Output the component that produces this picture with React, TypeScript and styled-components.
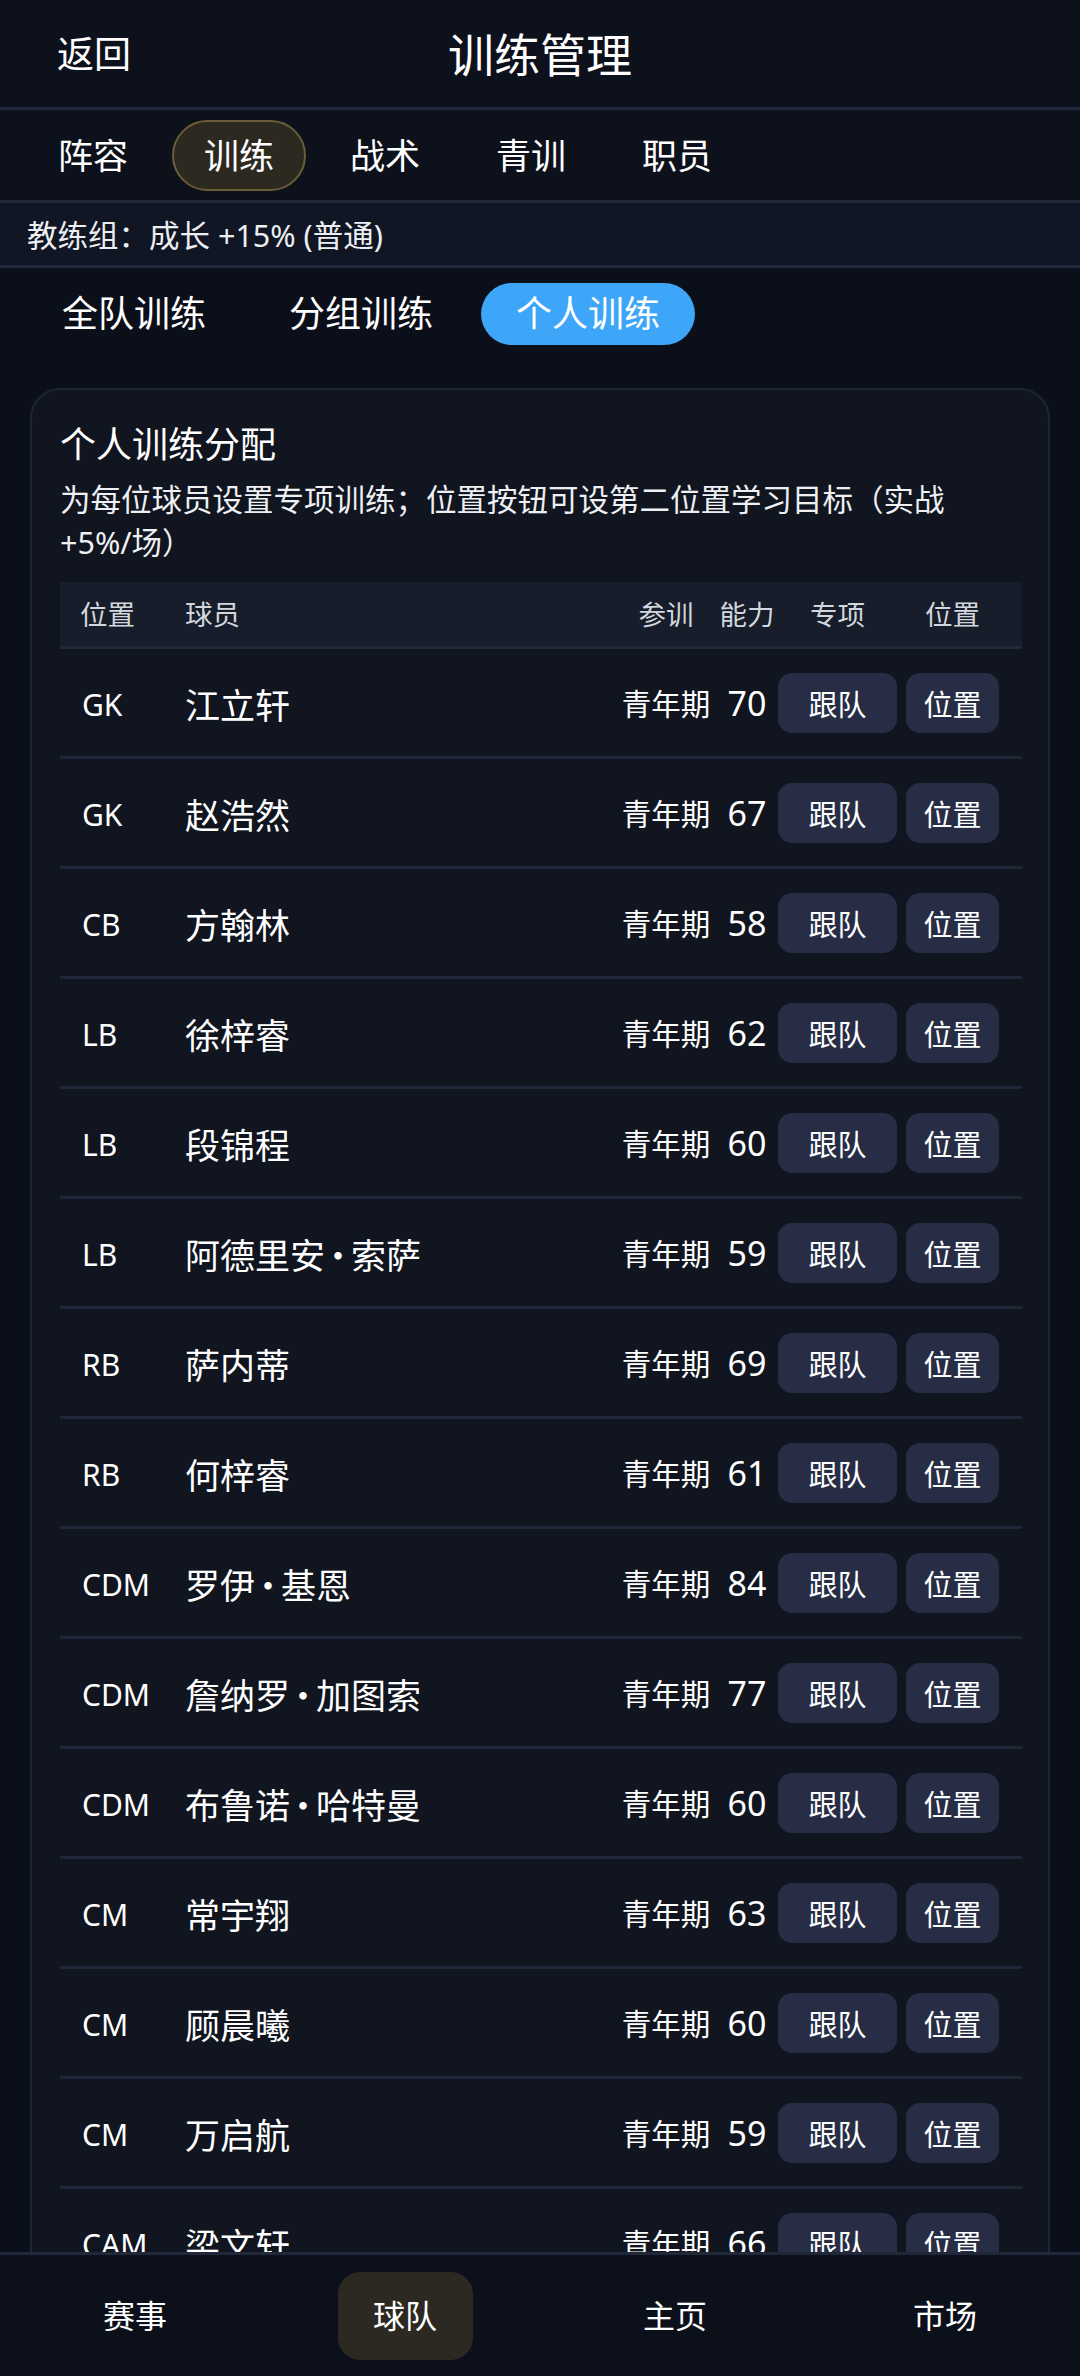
import React from 'react';
import styled, { createGlobalStyle } from 'styled-components';

type Player = { pos: string; name: string; ability: number };

const players: Player[] = [
  { pos: 'GK', name: '江立轩', ability: 70 },
  { pos: 'GK', name: '赵浩然', ability: 67 },
  { pos: 'CB', name: '方翰林', ability: 58 },
  { pos: 'LB', name: '徐梓睿', ability: 62 },
  { pos: 'LB', name: '段锦程', ability: 60 },
  { pos: 'LB', name: '阿德里安·索萨', ability: 59 },
  { pos: 'RB', name: '萨内蒂', ability: 69 },
  { pos: 'RB', name: '何梓睿', ability: 61 },
  { pos: 'CDM', name: '罗伊·基恩', ability: 84 },
  { pos: 'CDM', name: '詹纳罗·加图索', ability: 77 },
  { pos: 'CDM', name: '布鲁诺·哈特曼', ability: 60 },
  { pos: 'CM', name: '常宇翔', ability: 63 },
  { pos: 'CM', name: '顾晨曦', ability: 60 },
  { pos: 'CM', name: '万启航', ability: 59 },
  { pos: 'CAM', name: '梁文轩', ability: 66 },
];

const topTabs = ['阵容', '训练', '战术', '青训', '职员'];
const subTabs = ['全队训练', '分组训练', '个人训练'];
const navItems = ['赛事', '球队', '主页', '市场'];

// names like "罗伊·基恩": the dot is set a bit tighter than a full em
const renderName = (name: string) =>
  name.split('·').map((part, i) => (
    <React.Fragment key={i}>
      {i > 0 && <Dot>·</Dot>}
      {part}
    </React.Fragment>
  ));

const App: React.FC = () => (
  <>
    <GlobalStyle />
    <Screen>
      <TopBar>
        <Back>返回</Back>
        <Title>训练管理</Title>
        <span />
      </TopBar>
      <TabBar>
        {topTabs.map((t) => (
          <Tab key={t} $active={t === '训练'}>
            {t}
          </Tab>
        ))}
      </TabBar>
      <InfoBar>教练组：成长 +15% (普通)</InfoBar>
      <Scroll>
        <SubTabs>
          {subTabs.map((t) => (
            <SubTab key={t} $active={t === '个人训练'}>
              {t}
            </SubTab>
          ))}
        </SubTabs>
        <Card>
          <CardTitle>个人训练分配</CardTitle>
          <Desc>
            为每位球员设置专项训练；位置按钮可设第二位置学习目标（实战
            <NoWrap>+5%/场）</NoWrap>
          </Desc>
          <HeadRow>
            <HeadCell>位置</HeadCell>
            <HeadCell>球员</HeadCell>
            <HeadCell $center>参训</HeadCell>
            <HeadCell $center>能力</HeadCell>
            <SpecHead $center>专项</SpecHead>
            <HeadCell $center>位置</HeadCell>
          </HeadRow>
          {players.map((p) => (
            <Row key={p.name}>
              <Pos>{p.pos}</Pos>
              <Name>{renderName(p.name)}</Name>
              <Stage>青年期</Stage>
              <Ability>{p.ability}</Ability>
              <ActionButton $w={119}>跟队</ActionButton>
              <ActionButton $w={93}>位置</ActionButton>
            </Row>
          ))}
        </Card>
      </Scroll>
      <BottomNav>
        {navItems.map((n) => (
          <NavItem key={n} $active={n === '球队'}>
            {n}
          </NavItem>
        ))}
      </BottomNav>
    </Screen>
  </>
);

export default App;

const GlobalStyle = createGlobalStyle`
  html, body {
    margin: 0;
    padding: 0;
    background: #0b0f1a;
  }
  body {
    font-family: "Noto Sans", "Noto Sans CJK SC", sans-serif;
    color: #ffffff;
  }
  * {
    box-sizing: border-box;
  }
`;

const Screen = styled.div`
  height: 100vh;
  display: flex;
  flex-direction: column;
  overflow: hidden;
  background: #0b0f1a;
`;

const TopBar = styled.header`
  display: grid;
  grid-template-columns: 1fr auto 1fr;
  align-items: center;
  height: 110px;
  padding: 0 57px;
  background: #0d111c;
  border-bottom: 3px solid #20283a;
  flex-shrink: 0;
`;
const Back = styled.span`
  font-size: 37px;
  line-height: 1;
  justify-self: start;
`;
const Title = styled.h1`
  margin: 0;
  font-size: 46px;
  font-weight: 400;
  line-height: 1;
`;

const TabBar = styled.nav`
  display: flex;
  align-items: center;
  gap: 12px;
  height: 93px;
  padding: 0 26px;
  background: #0d111c;
  border-bottom: 3px solid #20283a;
  flex-shrink: 0;
`;
const Tab = styled.div<{ $active?: boolean }>`
  display: flex;
  align-items: center;
  height: 71px;
  padding: 0 30px;
  border-radius: 36px;
  border: 2px solid ${(p) => (p.$active ? '#6b5d36' : 'transparent')};
  background: ${(p) => (p.$active ? '#2c2920' : 'transparent')};
  font-size: 35px;
  line-height: 1;
`;

const InfoBar = styled.div`
  display: flex;
  align-items: center;
  height: 65px;
  padding-left: 27px;
  font-size: 30.5px;
  color: #eceef2;
  background: #111624;
  border-bottom: 3px solid #20283a;
  flex-shrink: 0;
`;

const Scroll = styled.main`
  flex: 1;
  min-height: 0;
  overflow: hidden;
  background: #0b0f1a;
`;

const SubTabs = styled.div`
  display: flex;
  gap: 13px;
  padding: 15px 27px 0;
`;
const SubTab = styled.div<{ $active?: boolean }>`
  display: flex;
  align-items: center;
  height: 62px;
  padding: 0 35px;
  border-radius: 31px;
  background: ${(p) => (p.$active ? '#3ea6f8' : 'transparent')};
  font-size: 36px;
  line-height: 1;
`;

const Card = styled.section`
  margin: 43px 30px 0;
  padding: 30px 26px 0 28px;
  border: 2px solid #1e2536;
  border-radius: 30px;
  background: #10151f;
`;
const CardTitle = styled.h2`
  margin: 0;
  font-size: 36px;
  font-weight: 400;
  line-height: 50px;
`;
const Desc = styled.p`
  margin: 8px 0 0;
  font-size: 30.5px;
  line-height: 43px;
  color: #eef0f4;
`;
const NoWrap = styled.span`
  white-space: nowrap;
`;

const HeadRow = styled.div`
  display: grid;
  grid-template-columns: 105px 1fr 100px 62px 128px 93px;
  align-items: center;
  height: 67px;
  margin-top: 18px;
  padding: 0 23px 0 20px;
  background: #171d2b;
  border-bottom: 3px solid #20283a;
`;
const HeadCell = styled.div<{ $center?: boolean }>`
  font-size: 27.5px;
  line-height: 1;
  color: #d3d6dd;
  text-align: ${(p) => (p.$center ? 'center' : 'left')};
  font-family: "Noto Sans CJK SC", sans-serif;
`;
const SpecHead = styled(HeadCell)`
  width: 119px;
`;

const Row = styled.div`
  display: grid;
  grid-template-columns: 105px 1fr 100px 62px 128px 93px;
  align-items: center;
  padding: 24px 23px 23px 20px;
  border-bottom: 3px solid #1f2637;
`;
const Pos = styled.div`
  font-size: 30px;
  line-height: 1;
  padding: 3px 0 0 2px;
`;
const Name = styled.div`
  font-family: "Noto Sans CJK SC", sans-serif;
  font-size: 35px;
  line-height: 1;
  white-space: nowrap;
`;
const Dot = styled.span`
  margin: 0 -4.5px;
`;
const Stage = styled.div`
  font-family: "Noto Sans CJK SC", sans-serif;
  font-size: 29.5px;
  line-height: 1;
  text-align: center;
`;
const Ability = styled.div`
  font-size: 34px;
  line-height: 1;
  text-align: center;
`;
const ActionButton = styled.button<{ $w: number }>`
  width: ${(p) => p.$w}px;
  height: 60px;
  padding: 0;
  border: none;
  border-radius: 14px;
  background: #262d45;
  color: #ffffff;
  font-family: "Noto Sans CJK SC", sans-serif;
  font-size: 29px;
  line-height: 1;
`;

const BottomNav = styled.footer`
  display: grid;
  grid-template-columns: repeat(4, 1fr);
  align-items: center;
  justify-items: center;
  height: 124px;
  background: #0c101b;
  border-top: 3px solid #20283a;
  flex-shrink: 0;
`;
const NavItem = styled.div<{ $active?: boolean }>`
  display: flex;
  align-items: center;
  justify-content: center;
  width: 135px;
  height: 88px;
  border-radius: 22px;
  background: ${(p) => (p.$active ? '#2c2922' : 'transparent')};
  font-size: 32px;
  line-height: 1;
`;
